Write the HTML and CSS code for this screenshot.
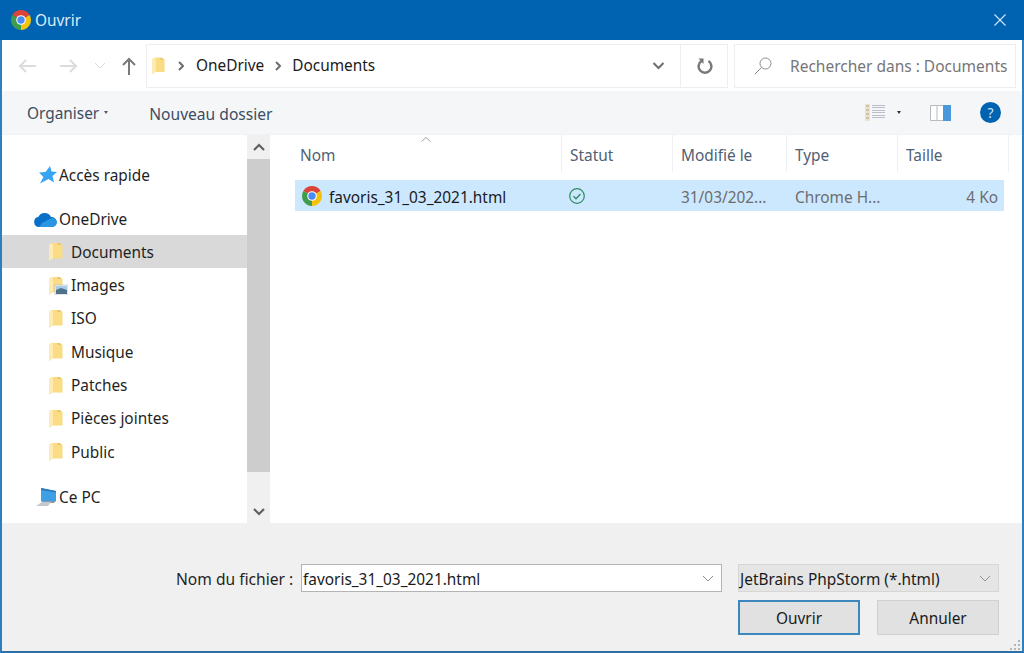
FILE: index.html
```html
<!DOCTYPE html>
<html lang="fr">
<head>
<meta charset="utf-8">
<title>Ouvrir</title>
<link rel="stylesheet" href="styles.css">
</head>
<body>
<svg class="defs" width="0" height="0">
  <symbol id="folder" viewBox="0 0 14 18">
    <path d="M3 0h8l2 2v13H3z" fill="#eec565"/>
    <path d="M0 1.500L3 0h5l1 2h4.500v13.500H3L0 18z" fill="#f9dc84"/>
    <path d="M0 1.500L4 .5v15L0 18z" fill="#fdebb3"/>
  </symbol>
  <symbol id="chrome" viewBox="0 0 20 20">
    <path d="M10 10L18.66 5A10 10 0 0 0 1.34 5z" fill="#db4437"/>
    <path d="M10 10L1.34 5A10 10 0 0 0 10 20z" fill="#3f9c4f"/>
    <path d="M10 10L10 20A10 10 0 0 0 18.66 5z" fill="#f4c20d"/>
    <circle cx="10" cy="10" r="4.800" fill="#fff"/>
    <circle cx="10" cy="10" r="3.700" fill="#4c8bf5"/>
  </symbol>
  <symbol id="chev-down" viewBox="0 0 12 7">
    <path d="M1 1l5 5 5-5" fill="none" stroke="currentColor"/>
  </symbol>
</svg>

<div class="window">
  <header class="titlebar">
    <svg class="ic-chrome-title"><use href="#chrome"/></svg>
    <span class="title">Ouvrir</span>
    <svg class="close" viewBox="0 0 12 12"><path d="M.5.5l11 11M11.5.5l-11 11" stroke="#d5e6f5" stroke-width="1.100" fill="none"/></svg>
  </header>

  <div class="navbar">
    <svg class="nav-back" viewBox="0 0 18 14"><path d="M1 7h16M7 1L1 7l6 6" fill="none" stroke="#dcdcdc" stroke-width="2"/></svg>
    <svg class="nav-fwd" viewBox="0 0 18 14"><path d="M17 7H1M11 1l6 6-6 6" fill="none" stroke="#dcdcdc" stroke-width="2"/></svg>
    <svg class="nav-recent"><use href="#chev-down"/></svg>
    <svg class="nav-up" viewBox="0 0 14 18"><path d="M7 18V2M1 8l6-6 6 6" fill="none" stroke="#7a7a7a" stroke-width="2"/></svg>
    <div class="address">
      <svg class="addr-folder"><use href="#folder"/></svg>
      <svg class="crumb-sep" viewBox="0 0 6 10"><path d="M1 1l4 4-4 4" fill="none" stroke="#6e6e6e" stroke-width="2"/></svg>
      <span class="crumb">OneDrive</span>
      <svg class="crumb-sep" viewBox="0 0 6 10"><path d="M1 1l4 4-4 4" fill="none" stroke="#6e6e6e" stroke-width="2"/></svg>
      <span class="crumb">Documents</span>
      <svg class="addr-drop" viewBox="0 0 12 8"><path d="M1 1l5 5 5-5" fill="none" stroke="#6e6e6e" stroke-width="2"/></svg>
      <div class="addr-refresh">
        <svg class="refresh" viewBox="0 0 16 18"><path d="M4.500 4A6.400 6.400 0 1 0 11.500 4" fill="none" stroke="#777" stroke-width="2.400"/><path d="M1.500 1.500L6.500 1.500 6.500 7z" fill="#777"/></svg>
      </div>
    </div>
    <div class="search">
      <svg class="search-ic" viewBox="0 0 18 18"><circle cx="11.500" cy="6.500" r="5.500" fill="none" stroke="#8a8a8a"/><path d="M7.500 10.500L.8 17.200" stroke="#8a8a8a" fill="none"/></svg>
      <span class="search-text">Rechercher dans : Documents</span>
    </div>
  </div>

  <div class="toolbar">
    <span class="tool-btn">Organiser</span>
    <span class="caret"></span>
    <span class="tool-btn new-folder">Nouveau dossier</span>
    <svg class="view-ic" viewBox="0 0 20 17">
      <path d="M0 0h5v17H0z" fill="#ece3cf"/>
      <path d="M1 2h3M1 6h3M1 10h3M1 14h3" stroke="#b0a080"/>
      <path d="M7 1.500h13M7 3.500h13M7 6.500h13M7 8.500h13M7 11.500h13M7 13.500h13" stroke="#b8bfc6"/>
    </svg>
    <span class="caret dark"></span>
    <svg class="pane-ic" viewBox="0 0 21 16">
      <path d="M.5.5h20v15H.5z" fill="#fff" stroke="#b6bcc2"/>
      <path d="M7 .5v15" stroke="#b6bcc2"/>
      <path d="M13 0h8v16h-8z" fill="#4a98dc"/>
    </svg>
    <span class="help">?</span>
  </div>

  <div class="main">
    <nav class="sidebar">
      <div class="tree">
        <div class="row root gap-after">
          <svg class="root-ic" viewBox="0 0 20 18"><path d="M13 0l1.500 5.500L20 6l-4.500 4 1.500 6.500-5.500-3.500L3 17.500l3.500-6.500L2 6.500 8.500 6z" fill="#38a3f1"/></svg>
          <span>Accès rapide</span>
        </div>
        <div class="row root">
          <svg class="root-ic cloud" viewBox="0 0 23 15"><path d="M5 15a5 5 0 0 1-.8-9.900A7 7 0 0 1 17 5a5 5 0 0 1 1 10z" fill="#0a6fc8"/><path d="M5 15h13a5 5 0 0 0 5-5 4.500 4.500 0 0 0-6-3.800L8 11z" fill="#2a95e2"/></svg>
          <span>OneDrive</span>
        </div>
        <div class="row child selected"><svg class="folder"><use href="#folder"/></svg><span>Documents</span></div>
        <div class="row child">
          <svg class="folder pics" viewBox="0 0 19 18">
            <use href="#folder" width="14" height="18"/>
            <path d="M6 8h13v10H6z" fill="#f3f6f8" stroke="#9fb0bc" stroke-width=".5"/>
            <path d="M7 9h11v4H7z" fill="#a8cde8"/><path d="M7 13l5-2 6 2v4H7z" fill="#51718a"/>
          </svg>
          <span>Images</span>
        </div>
        <div class="row child"><svg class="folder"><use href="#folder"/></svg><span>ISO</span></div>
        <div class="row child"><svg class="folder"><use href="#folder"/></svg><span>Musique</span></div>
        <div class="row child"><svg class="folder"><use href="#folder"/></svg><span>Patches</span></div>
        <div class="row child"><svg class="folder"><use href="#folder"/></svg><span>Pièces jointes</span></div>
        <div class="row child gap-after"><svg class="folder"><use href="#folder"/></svg><span>Public</span></div>
        <div class="row root">
          <svg class="root-ic pc" viewBox="0 0 21 18">
            <path d="M5 0l15 3v10H5z" fill="#3d9fe4"/><path d="M5 0l15 3v1.500L5 2z" fill="#2a7ab9"/>
            <path d="M5 13h15l-2 2H7z" fill="#8c99a3"/>
            <path d="M0 18l6-4h9l-3 4z" fill="#c2c8cd"/>
          </svg>
          <span>Ce PC</span>
        </div>
      </div>
      <div class="scrollbar">
        <div class="sb-btn"><svg viewBox="0 0 12 8"><path d="M1 7l5-5 5 5" fill="none" stroke="#606060" stroke-width="2.200"/></svg></div>
        <div class="sb-thumb"></div>
        <div class="sb-btn low"><svg viewBox="0 0 12 8"><path d="M1 1l5 5 5-5" fill="none" stroke="#606060" stroke-width="2.200"/></svg></div>
      </div>
    </nav>

    <section class="files">
      <div class="head">
        <svg class="sort" viewBox="0 0 10 5"><path d="M.5 4.500L5 .5l4.500 4" fill="none" stroke="#a0a0a0"/></svg>
        <div class="col c-name">Nom</div>
        <div class="col c-stat">Statut</div>
        <div class="col c-date">Modifié le</div>
        <div class="col c-type">Type</div>
        <div class="col c-size">Taille</div>
      </div>
      <div class="file">
        <div class="cell c-name name"><svg class="file-ic"><use href="#chrome"/></svg><span>favoris_31_03_2021.html</span></div>
        <div class="cell c-stat"><svg class="ok" viewBox="0 0 16 16"><circle cx="8" cy="8" r="7.300" fill="none" stroke="#2f8a5f" stroke-width="1.200"/><path d="M4.500 8.200l2.500 2.500 4.500-4.700" fill="none" stroke="#2f8a5f" stroke-width="1.300"/></svg></div>
        <div class="cell c-date">31/03/202...</div>
        <div class="cell c-type">Chrome H...</div>
        <div class="cell c-size size">4 Ko</div>
      </div>
    </section>
  </div>

  <footer class="bottom">
    <div class="form">
      <label class="fname-label">Nom du fichier :</label>
      <div class="combo"><span>favoris_31_03_2021.html</span><svg class="combo-ch"><use href="#chev-down"/></svg></div>
      <div class="filter"><span>JetBrains PhpStorm (*.html)</span><svg class="combo-ch"><use href="#chev-down"/></svg></div>
      <div class="buttons">
        <div class="btn primary">Ouvrir</div>
        <div class="btn">Annuler</div>
      </div>
    </div>
    <svg class="grip" viewBox="0 0 10 10"><path d="M8 0h2v2H8zM4 4h2v2H4zM8 4h2v2H8zM0 8h2v2H0zM4 8h2v2H4zM8 8h2v2H8z" fill="#b5b5b5"/></svg>
  </footer>
</div>
</body>
</html>
```
FILE: styles.css
```css
* { box-sizing: border-box; }
html, body { margin: 0; height: 100%; overflow: hidden; }
body { font-family: "Noto Sans", "Open Sans", sans-serif; font-size: 15.4px; color: #1f1f1f; background: #fff; }
svg { display: block; flex: none; }
.defs { position: absolute; }

.window { width: 1024px; height: 653px; display: flex; flex-direction: column; border-left: 2px solid #2d7fc0; border-right: 2px solid #2d7fc0; border-bottom: 2px solid #2d6fa8; background: #fff; }

.titlebar { height: 40px; margin: 0 -2px; background: #0063b1; display: flex; align-items: center; padding-left: 11px; color: #dcebf7; }
.ic-chrome-title { width: 20px; height: 20px; }
.title { margin-left: 4px; }
.close { width: 12px; height: 12px; margin-left: auto; margin-right: 18px; }

.navbar { height: 51px; display: flex; align-items: center; }
.nav-back { width: 18px; height: 14px; margin-left: 17px; }
.nav-fwd { width: 18px; height: 14px; margin-left: 22px; }
.nav-recent { width: 12px; height: 7px; margin-left: 17px; color: #dcdcdc; }
.nav-up { width: 14px; height: 18px; margin-left: 16px; }
.address { width: 582px; height: 44px; margin-left: 10px; border: 1px solid #eeeeee; display: flex; align-items: center; }
.addr-folder { width: 13px; height: 18px; margin-left: 5px; }
.crumb-sep { width: 6px; height: 10px; margin: 0 12px 0 13px; }
.crumb { color: #1a1a1a; }
.crumb + .crumb-sep { margin-left: 11px; margin-right: 11px; }
.addr-drop { width: 13px; height: 8px; margin-left: auto; margin-right: 15px; }
.addr-refresh { width: 47px; height: 100%; padding-left: 2px; border-left: 1px solid #eeeeee; display: flex; align-items: center; justify-content: center; }
.refresh { width: 16px; height: 18px; }
.search { width: 282px; height: 44px; margin-left: 6px; border: 1px solid #eeeeee; display: flex; align-items: center; padding-left: 19px; color: #767676; }
.search-ic { width: 18px; height: 18px; }
.search-text { margin-left: 18px; white-space: nowrap; font-size: 15.500px; }

.toolbar { height: 44px; background: #f5f6f7; border-bottom: 1px solid #f0f1f2; display: flex; align-items: center; padding-left: 25px; color: #3c4d63; }
.tool-btn { padding-top: 2px; }
.caret { width: 0; height: 0; border: 2.500px solid transparent; border-top: 3px solid #556; border-bottom: 0; margin-left: 5px; }
.caret.dark { border-top-color: #333; margin-left: 12px; }
.new-folder { margin-left: 41px; font-size: 15.600px; }
.view-ic { width: 20px; height: 17px; margin-left: auto; }
.pane-ic { width: 21px; height: 16px; margin-left: 29px; }
.help { width: 21px; height: 21px; margin-left: 29px; margin-right: 21px; border-radius: 50%; background: #0063b1; color: #cfe3f3; font-size: 14px; line-height: 21px; text-align: center; }

.main { height: 388px; display: flex; }
.sidebar { width: 268px; display: flex; flex: none; }
.tree { width: 245px; padding-top: 22px; }
.row { height: 33.330px; padding-top: 2px; display: flex; align-items: center; white-space: nowrap; }
.gap-after { margin-bottom: 11px; }
.root { padding-top: 3px; }
.root-ic { width: 20px; height: 18px; margin-left: 35px; margin-right: 2px; }
.root-ic.cloud { width: 23px; height: 15px; margin-left: 32px; margin-right: 2px; }
.root-ic.pc { width: 21px; height: 18px; margin-left: 34px; margin-right: 2px; }
.child { padding-left: 47px; }
.child .folder { width: 14px; height: 18px; margin-right: 8px; }
.child .folder.pics { width: 19px; margin-right: 3px; }
.selected { background: #d9d9d9; }
.scrollbar { width: 23px; display: flex; flex-direction: column; background: #f0f0f0; }
.sb-btn { height: 24px; flex: none; display: flex; align-items: center; justify-content: center; }
.sb-btn svg { width: 12px; height: 8px; }
.sb-thumb { height: 313px; background: #cdcdcd; }
.sb-btn.low { height: 51px; align-items: flex-end; padding-bottom: 7px; }

.files { flex: 1; min-width: 0; padding: 0 0 0 23px; margin-left: 2px; position: relative; }
.head { display: flex; height: 45px; position: relative; color: #4f6075; }
.sort { position: absolute; left: 126px; top: 2px; width: 10px; height: 5px; }
.col { height: 37px; padding-top: 4px; display: flex; align-items: center; padding-left: 8px; border-right: 1px solid #eef0f2; }
.c-name { width: 266px; }
.head .c-name { width: 267px; padding-left: 5px; }
.c-stat { width: 111px; }
.c-date { width: 114px; }
.c-type { width: 111px; }
.c-size { width: 111px; }
.file { display: flex; height: 31px; width: 709px; background: #cce8ff; color: #6d6d6d; }
.cell { display: flex; align-items: center; padding-top: 3px; padding-left: 9px; white-space: nowrap; }
.cell svg { margin-top: -3px; }
.name { color: #1a1a1a; padding-left: 7px; }
.file-ic { width: 20px; height: 20px; margin-right: 7px; }
.ok { width: 16px; height: 16px; margin-left: -1px; }
.size { width: 107px; justify-content: flex-end; padding-right: 6px; }

.bottom { flex: 1; background: #f0f0f0; position: relative; padding-top: 41px; }
.form { display: grid; grid-template-columns: 421px 261px; column-gap: 16px; row-gap: 8px; padding-left: 299px; position: relative; }
.fname-label { position: absolute; left: 174px; top: 4px; font-size: 15.600px; }
.combo, .filter { height: 28px; display: flex; align-items: center; justify-content: space-between; padding: 2px 7px 0 1px; border: 1px solid #b4b4b4; background: #fff; color: #1a1a1a; }
.combo-ch { margin-top: -2px; }
.filter { background: #e5e5e5; border-color: #d6d6d6; }
.combo-ch { width: 12px; height: 7px; color: #909090; }
.buttons { grid-column: 2; display: flex; justify-content: space-between; }
.btn { width: 122px; height: 35px; padding-top: 2px; background: #e1e1e1; border: 1px solid #d0d0d0; display: flex; align-items: center; justify-content: center; color: #1a1a1a; }
.btn.primary { border: 2px solid #3c87bd; }
.grip { position: absolute; right: 2px; bottom: 1px; width: 10px; height: 10px; }
```
